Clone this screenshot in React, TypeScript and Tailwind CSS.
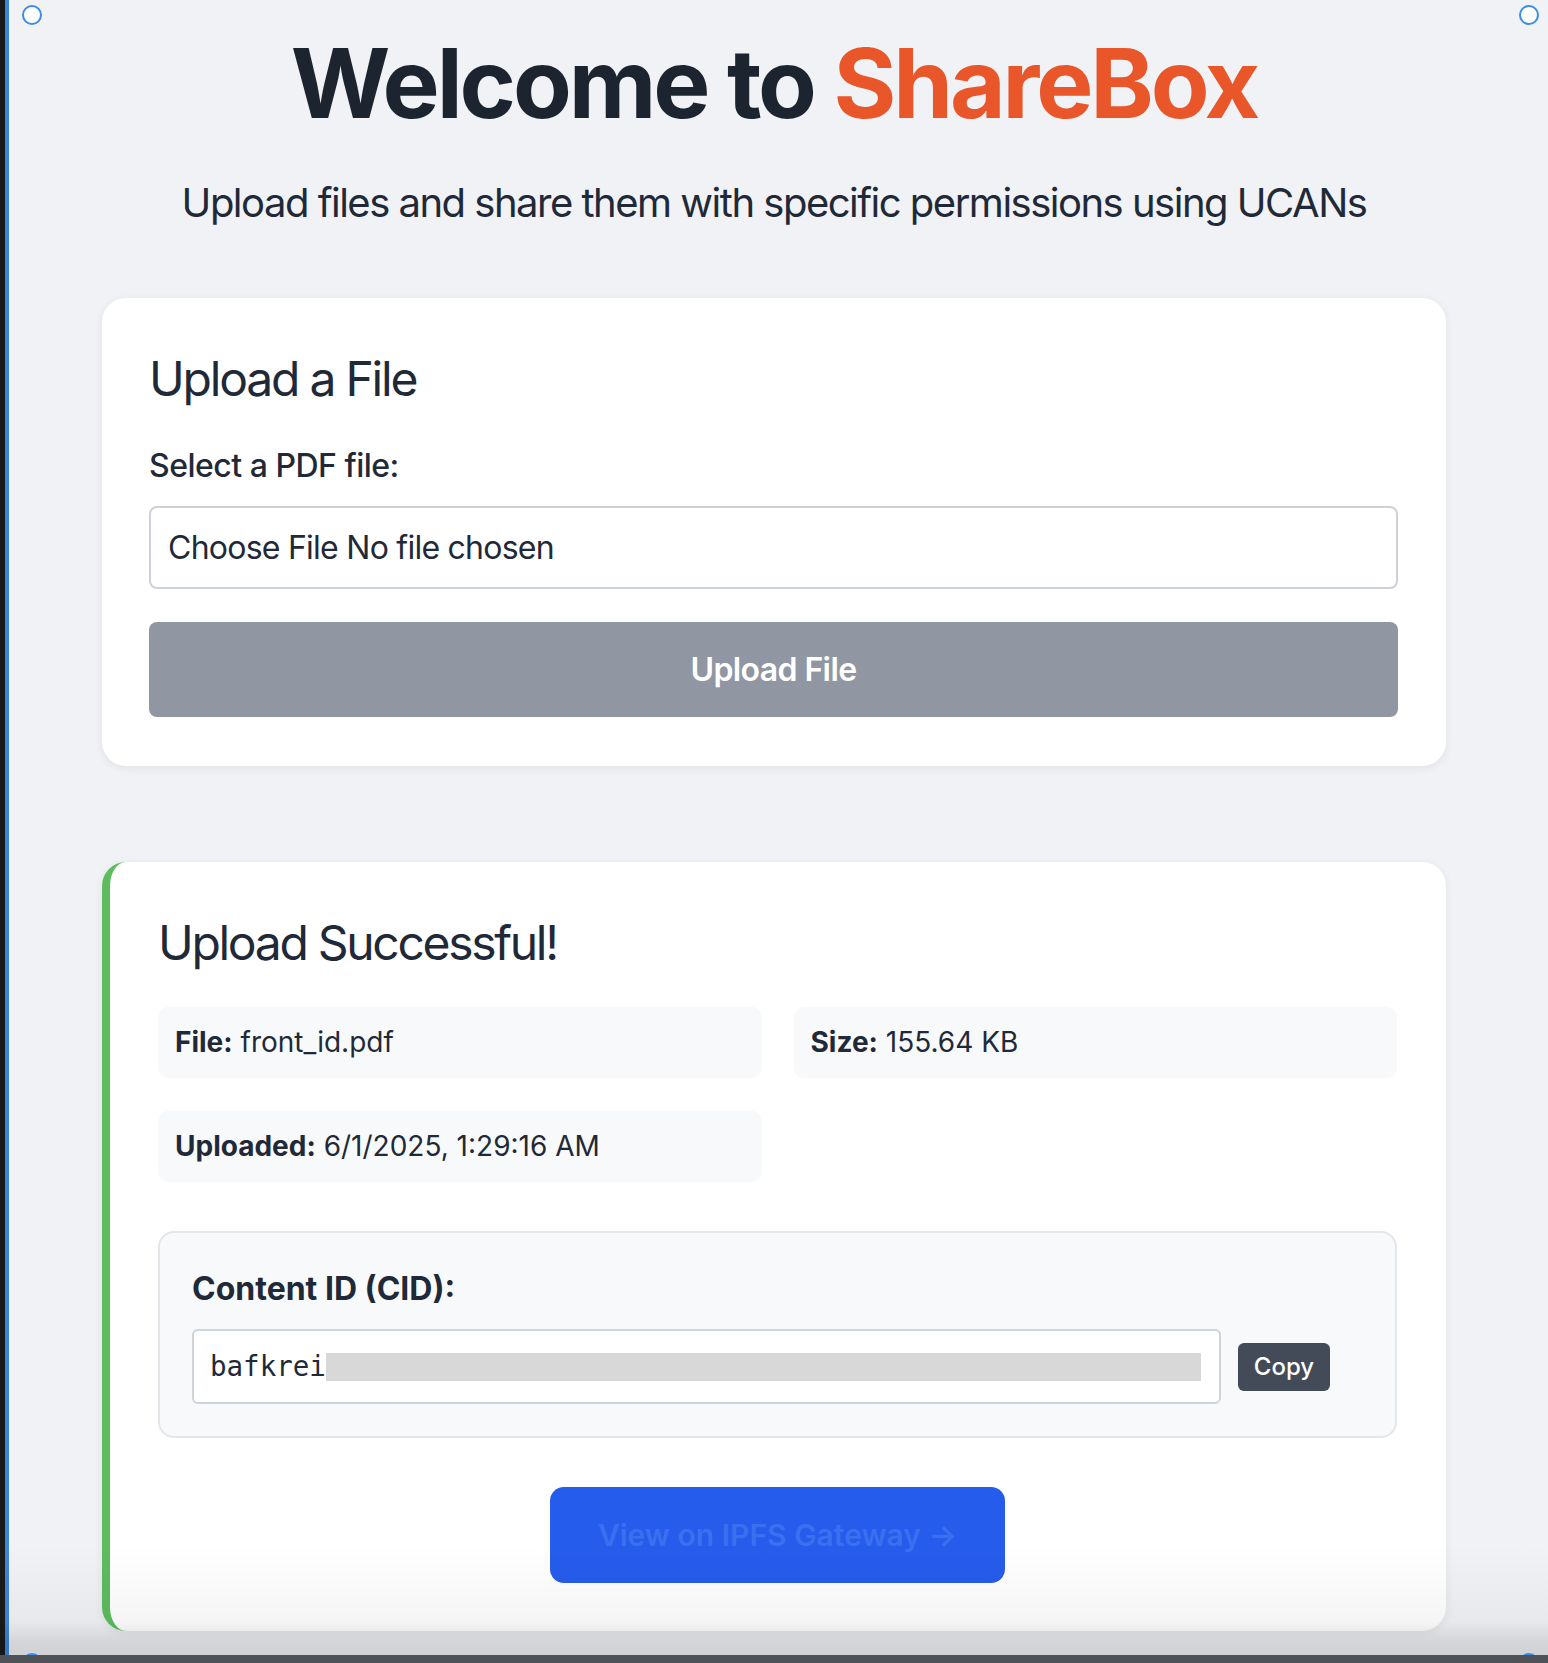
import React from "react";

const CID_PREFIX = "bafkrei";

function InfoItem({ label, value }: { label: string; value: string }) {
  return (
    <div className="rounded-[10px] bg-[#f8f9fb] px-[17px] py-[18px] text-[28px] leading-[35px]">
      <span className="font-bold">{label}</span> {value}
    </div>
  );
}

function Handle({ className }: { className: string }) {
  return (
    <div
      className={`absolute h-[20px] w-[20px] rounded-full border-2 border-[#3b8ee6] bg-white ${className}`}
    />
  );
}

export default function App() {
  return (
    <div className="relative h-[1663px] overflow-hidden bg-[#f0f2f5] font-['Inter',sans-serif] text-[#1f2937]">
      <main className="mx-auto w-[1344px] pt-[25px]">
        <h1 className="text-center text-[96px] font-bold leading-[116px] tracking-[-3.1px] text-[#1c2430]">
          Welcome to <span className="text-[#e8562a]">ShareBox</span>
        </h1>
        <p className="mt-[37px] text-center text-[40px] leading-[50px] tracking-[-1.5px]">
          Upload files and share them with specific permissions using UCANs
        </p>

        {/* upload card */}
        <section className="mt-[70px] rounded-[24px] bg-white pb-[49px] pl-[47px] pr-[48px] pt-[52px] shadow-[0_2px_10px_rgba(0,0,0,0.07)]">
          <h2 className="text-[48px] leading-[58px] tracking-[-2.2px]">Upload a File</h2>
          <label className="mt-[38px] block text-[32px] font-medium leading-[39px] tracking-[-0.5px]">
            Select a PDF file:
          </label>
          <div className="mt-[21px] flex h-[83px] items-center rounded-[8px] border-2 border-[#cdd1d8] px-[17px] text-[32px] tracking-[-0.75px]">
            Choose File No file chosen
          </div>
          <button className="mt-[33px] flex h-[95px] w-full items-center justify-center rounded-[8px] bg-[#9097a3] text-[32px] font-semibold tracking-[-0.6px] text-white">
            Upload File
          </button>
        </section>

        {/* result card */}
        <section className="mt-[96px] rounded-[24px] border-l-[8px] border-[#5cbc5e] bg-white pb-[48px] pl-[48px] pr-[49px] pt-[52px] shadow-[0_2px_10px_rgba(0,0,0,0.07)]">
          <h2 className="text-[48px] leading-[58px] tracking-[-2.3px]">Upload Successful!</h2>

          <div className="mt-[35px] grid grid-cols-2 gap-x-[32px] gap-y-[33px]">
            <InfoItem label="File:" value="front_id.pdf" />
            <InfoItem label="Size:" value="155.64 KB" />
            <InfoItem label="Uploaded:" value="6/1/2025, 1:29:16 AM" />
          </div>

          <div className="mt-[49px] rounded-[16px] border-2 border-[#e3e6eb] bg-[#f8f9fb] py-[32px] pl-[32px] pr-[65px]">
            <div className="text-[32px] font-bold leading-[48px]">Content ID (CID):</div>
            <div className="mt-[16px] flex items-center gap-[17px]">
              <div className="flex h-[75px] flex-1 items-center rounded-[6px] border-2 border-[#cfd3da] bg-white pl-[16px] pr-[18px] font-['DejaVu_Sans_Mono',monospace] text-[27.5px]">
                <span>{CID_PREFIX}</span>
                <span className="h-[28px] flex-1 bg-[#d8d8d8]" />
              </div>
              <button className="flex h-[48px] w-[92px] items-center justify-center rounded-[6px] bg-[#434b59] text-[24px] font-medium text-white">
                Copy
              </button>
            </div>
          </div>

          <div className="mt-[49px] flex justify-center">
            <button className="flex h-[96px] items-center rounded-[14px] bg-[#255ceb] px-[48px] text-[30px] font-semibold text-[#3a70f0]">
              View on IPFS Gateway →
            </button>
          </div>
        </section>
      </main>

      {/* editor frame overlays */}
      <div className="absolute inset-y-0 left-0 w-[5px] bg-[#1a1a1a]" />
      <div className="absolute inset-y-0 left-[5px] w-[4px] bg-[#3a86dc]" />
      <Handle className="left-[22px] top-[5px]" />
      <Handle className="left-[1519px] top-[5px]" />
      <div className="pointer-events-none absolute inset-x-0 bottom-[8px] h-[110px] bg-[linear-gradient(to_bottom,rgba(0,0,0,0),rgba(0,0,0,0.04)_70%,rgba(0,0,0,0.12)_88%,rgba(0,0,0,0.13))]" />
      <Handle className="left-[22px] top-[1653px]" />
      <Handle className="left-[1519px] top-[1653px]" />
      <div className="absolute inset-x-0 bottom-0 h-[8px] bg-[#4f5358]" />
    </div>
  );
}
